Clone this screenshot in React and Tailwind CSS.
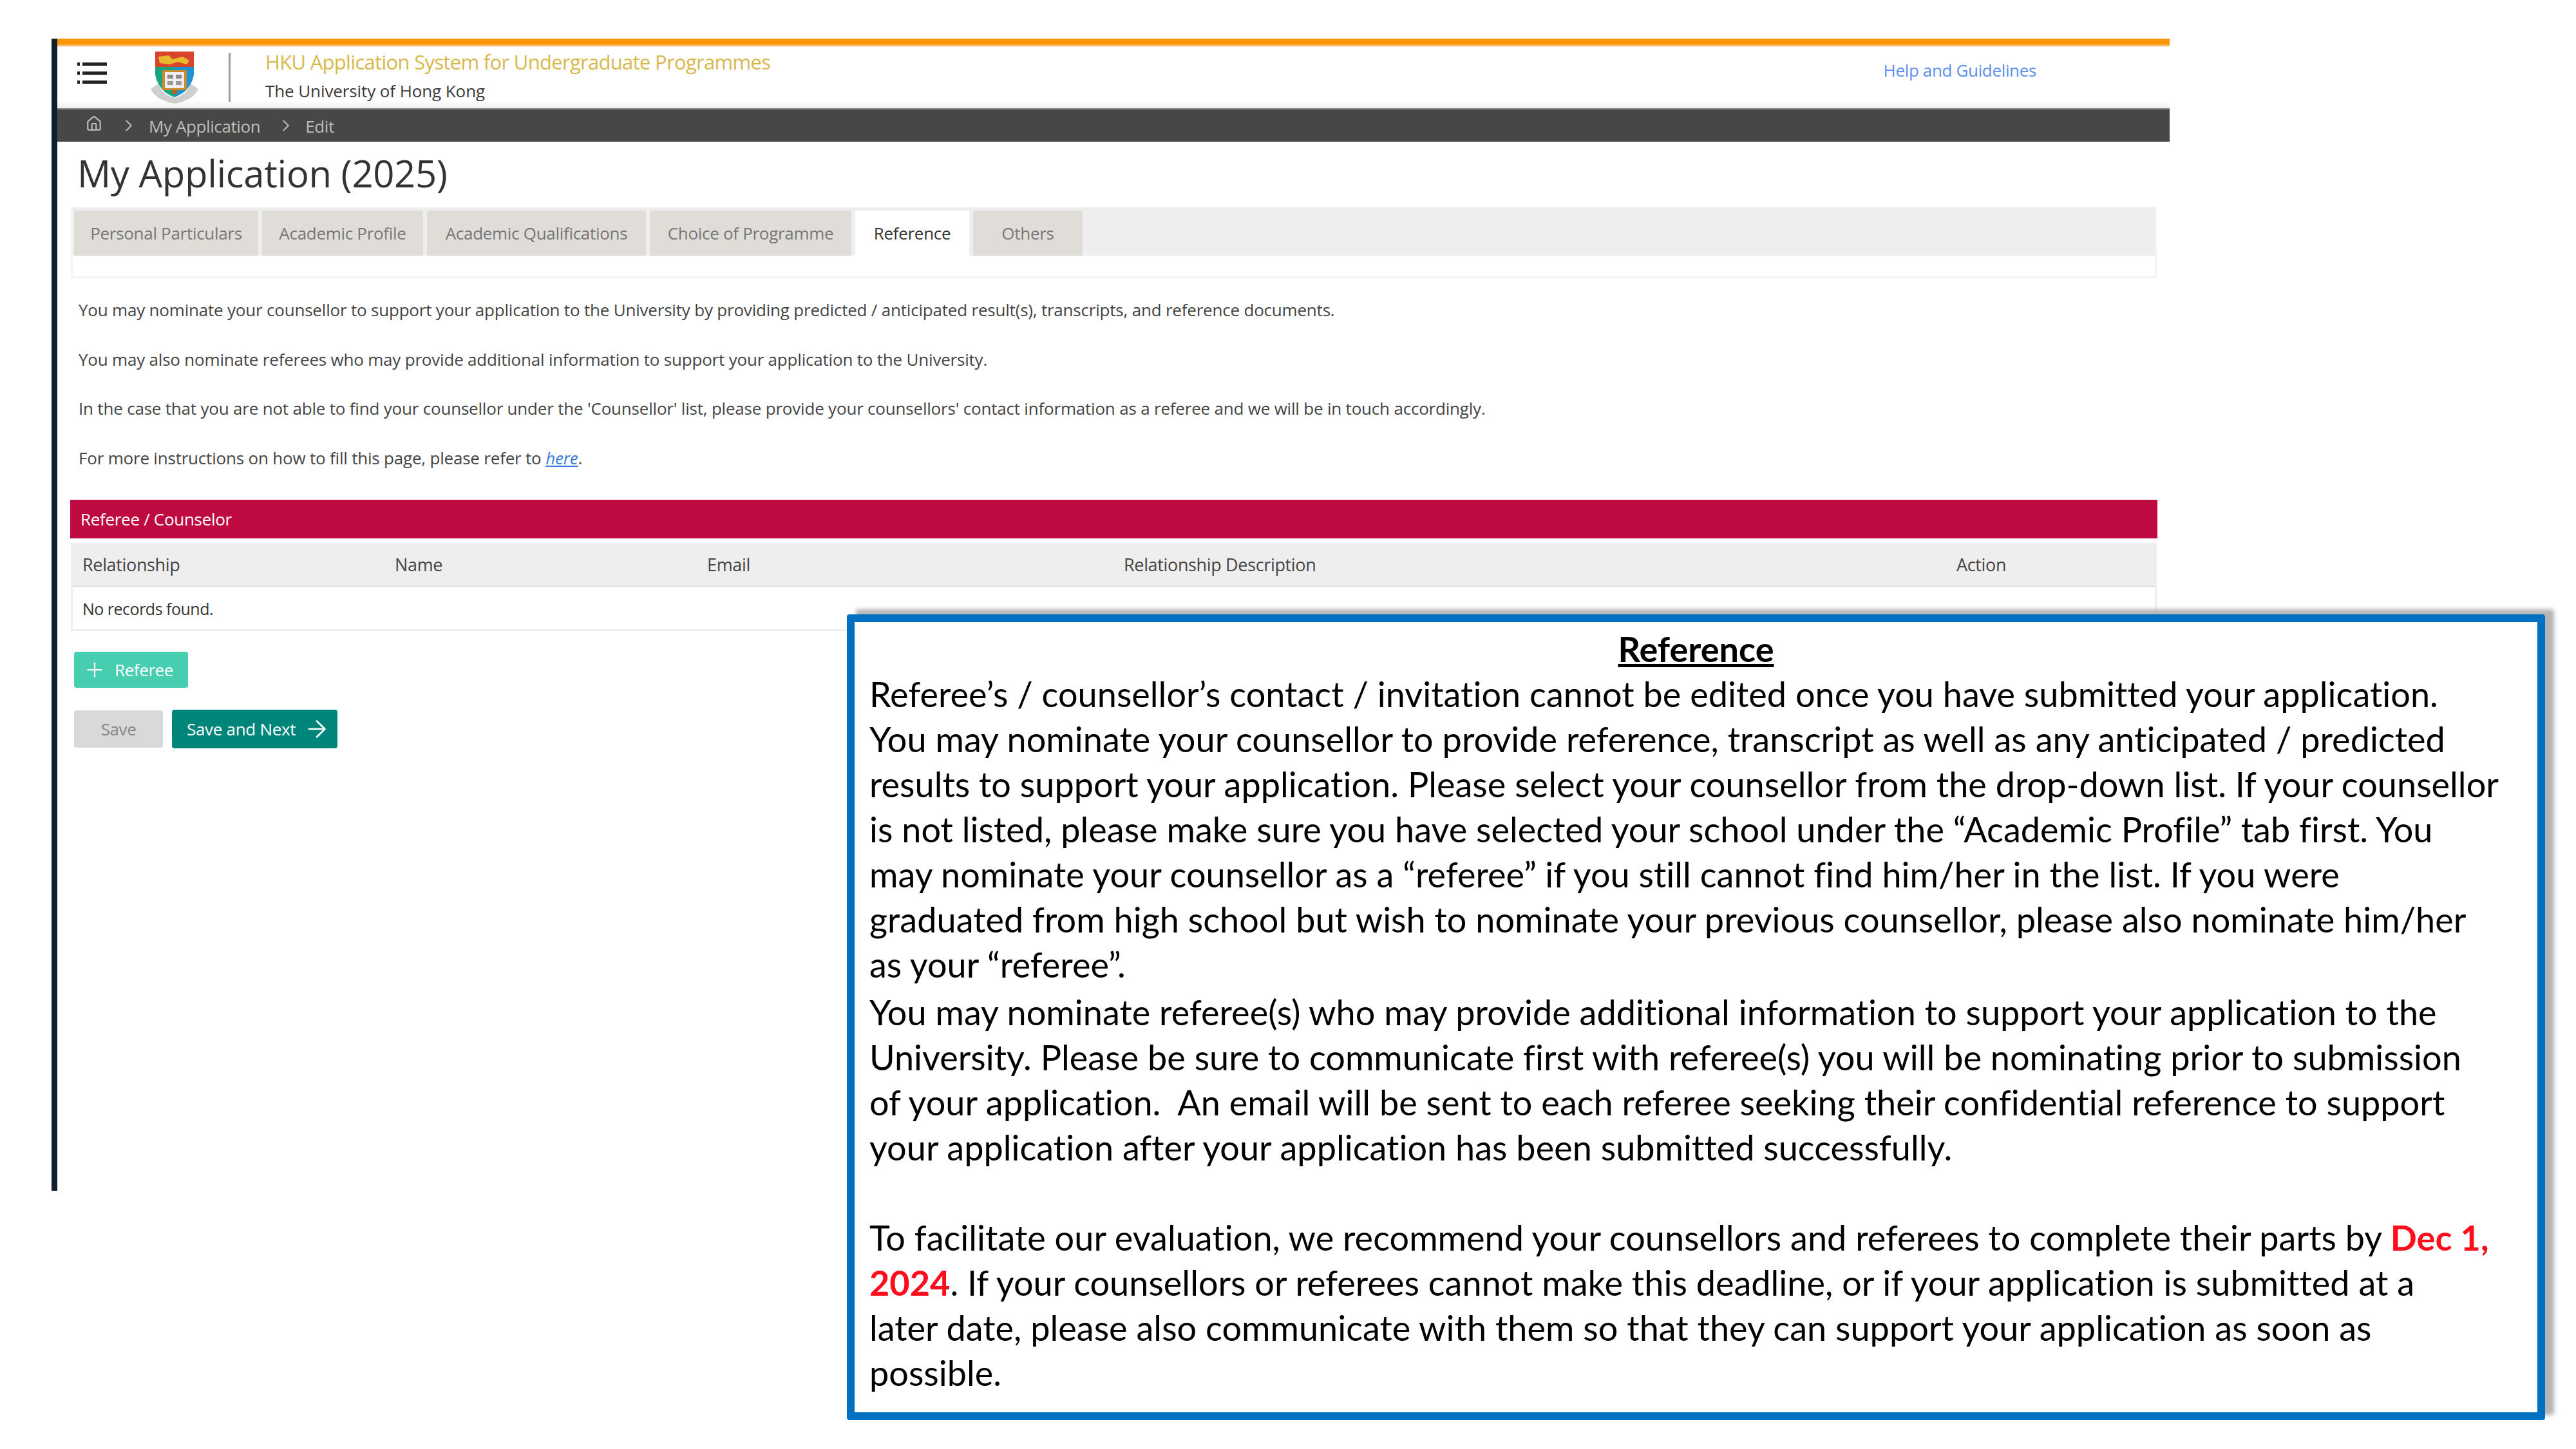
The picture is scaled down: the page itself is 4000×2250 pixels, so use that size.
import { Plus, ArrowRight, ChevronRight, Home } from "lucide-react";

const TABS = [
  { label: "Personal Particulars", w: "w-[286px]" },
  { label: "Academic Profile", w: "w-[250px]" },
  { label: "Academic Qualifications", w: "w-[340px]" },
  { label: "Choice of Programme", w: "w-[313px]" },
  { label: "Reference", w: "w-[177px]", active: true },
  { label: "Others", w: "w-[170px]" },
];

const INTRO = [
  "You may nominate your counsellor to support your application to the University by providing predicted / anticipated result(s), transcripts, and reference documents.",
  "You may also nominate referees who may provide additional information to support your application to the University.",
  "In the case that you are not able to find your counsellor under the 'Counsellor' list, please provide your counsellors' contact information as a referee and we will be in touch accordingly.",
];

const NOTE_A = [
  "Referee’s / counsellor’s contact / invitation cannot be edited once you have submitted your application.",
  "You may nominate your counsellor to provide reference, transcript as well as any anticipated / predicted",
  "results to support your application. Please select your counsellor from the drop-down list. If your counsellor",
  "is not listed, please make sure you have selected your school under the “Academic Profile” tab first. You",
  "may nominate your counsellor as a “referee” if you still cannot find him/her in the list. If you were",
  "graduated from high school but wish to nominate your previous counsellor, please also nominate him/her",
  "as your “referee”.",
];

const NOTE_B = [
  "You may nominate referee(s) who may provide additional information to support your application to the",
  "University. Please be sure to communicate first with referee(s) you will be nominating prior to submission",
  "of your application.  An email will be sent to each referee seeking their confidential reference to support",
  "your application after your application has been submitted successfully.",
];

// HKU crest, simplified
function Crest() {
  return (
    <svg width="74" height="82" viewBox="0 0 74 82" className="shrink-0">
      <path d="M0 58 Q8 76 37 81 Q66 76 74 58 L62 50 Q56 68 37 72 Q18 68 12 50 Z" fill="#cfcfcf" />
      <rect x="7" y="0" width="60" height="24" fill="#d9452b" />
      <path d="M12 8 L28 6 L34 12 L50 8 L60 14 L56 20 L42 16 L30 20 L14 18 Z" fill="#e8b92c" />
      <path d="M7 24 H37 V71 Q12 62 7 36 Z" fill="#17a584" />
      <path d="M67 24 H37 V71 Q62 62 67 36 Z" fill="#1b93d6" />
      <rect x="18" y="29" width="38" height="31" fill="#c98a2e" />
      <rect x="22" y="32" width="30" height="25" fill="#eeeeee" />
      <rect x="26" y="36" width="9" height="6" fill="#8a8a8a" />
      <rect x="39" y="36" width="9" height="6" fill="#8a8a8a" />
      <rect x="26" y="46" width="9" height="6" fill="#9a9a9a" />
      <rect x="39" y="46" width="9" height="6" fill="#9a9a9a" />
      <rect x="33" y="60" width="8" height="6" fill="#b5651d" />
    </svg>
  );
}

function MenuIcon() {
  return (
    <svg width="46" height="34" viewBox="0 0 46 34" className="shrink-0">
      <rect x="8" y="0" width="38" height="5" fill="#222" />
      <rect x="8" y="14" width="38" height="5" fill="#222" />
      <rect x="8" y="28" width="38" height="5" fill="#222" />
      <rect x="0" y="0" width="4" height="5" fill="#222" />
      <rect x="0" y="14" width="4" height="5" fill="#222" />
      <rect x="0" y="28" width="4" height="5" fill="#222" />
    </svg>
  );
}

function Header() {
  return (
    <div className="h-[96px] flex items-center bg-gradient-to-b from-white from-[88%] to-[#eeeeee]">
      <div className="ml-[31px] -mt-[12px]"><MenuIcon /></div>
      <div className="ml-[68px] mt-[2px]"><Crest /></div>
      <div className="ml-[47px] w-[3px] h-[76px] bg-[#9a9a9a]" />
      <div className="ml-[54px] flex flex-col gap-[12px] -mt-[6px]">
        <span className="text-[31px] leading-[36px] text-[#d8b84c] tracking-[-0.7px]">HKU Application System for Undergraduate Programmes</span>
        <span className="text-[26px] leading-[30px] text-[#3a3a3a] tracking-[-0.1px]">The University of Hong Kong</span>
      </div>
      <a className="ml-auto mr-[207px] -mt-[22px] text-[26px] text-[#5b8ff0] tracking-[-0.35px]">Help and Guidelines</a>
    </div>
  );
}

function Breadcrumb() {
  return (
    <div className="h-[52px] border-t-2 border-[#8a8a8a] bg-[#474747] flex items-center pl-[44px] text-[26px] text-[#bdbdbd] tracking-[-0.4px]">
      <Home size={26} strokeWidth={2} className="-mt-[6px] shrink-0" />
      <ChevronRight size={30} strokeWidth={1.5} className="ml-[26px] shrink-0" />
      <span className="ml-[16px] mt-[2px]">My Application</span>
      <ChevronRight size={30} strokeWidth={1.5} className="ml-[25px] shrink-0" />
      <span className="ml-[15px] mt-[2px]">Edit</span>
    </div>
  );
}

function Tabs() {
  return (
    <div className="mt-[13px] ml-[21px] w-[3239px] h-[110px] border-[3px] border-t-0 border-[#f3f3f3]">
      <div className="h-[75px] bg-[#eeeeee] flex pt-[5px] pl-[2px] gap-[6px]">
        {TABS.map((t) => (
          <div
            key={t.label}
            className={
              t.active
                ? t.w + " flex items-center justify-center bg-white text-[26px] text-[#333] tracking-[-0.3px]"
                : t.w + " flex items-center justify-center bg-[#e0ddd8] text-[26px] text-[#777] tracking-[-0.3px]"
            }
          >
            {t.label}
          </div>
        ))}
      </div>
    </div>
  );
}

function Table() {
  return (
    <div className="mt-[7px] ml-[21px] w-[3239px] border-[3px] border-[#eeeeee]">
      <div className="h-[66px] bg-[#eeeeee] border-b-[3px] border-[#e4e4e4] grid grid-cols-[485px_485px_647px_1293px_1fr] items-center pl-[15px] text-[27px] text-[#444] tracking-[-0.35px] font-medium">
        <span>Relationship</span>
        <span>Name</span>
        <span>Email</span>
        <span>Relationship Description</span>
        <span>Action</span>
      </div>
      <div className="h-[65px] flex items-center pl-[15px] pt-[3px] text-[25px] text-[#333] tracking-[-0.5px]">No records found.</div>
    </div>
  );
}

function Note() {
  return (
    <div className="absolute left-[1315px] top-[954px] w-[2637px] h-[1251px] border-[12px] border-[#0070c0] rounded-[4px] bg-white pl-[23px] pt-[7px] shadow-[14px_-8px_6px_#b5b5b5] font-['Lato',sans-serif] text-[54px] leading-[70px] text-black whitespace-pre tracking-[0.03px] [font-variant-ligatures:none]">
      <div className="text-center font-bold underline pr-[23px]">Reference</div>
      {NOTE_A.map((l) => <div key={l}>{l}</div>)}
      <div className="mt-[4px]">
        {NOTE_B.map((l) => <div key={l}>{l}</div>)}
      </div>
      <div className="mt-[70px]">
        <div>To facilitate our evaluation, we recommend your counsellors and referees to complete their parts by <b className="text-[#ff0d1d]">Dec 1,</b></div>
        <div><b className="text-[#ff0d1d]">2024</b>. If your counsellors or referees cannot make this deadline, or if your application is submitted at a</div>
        <div>later date, please also communicate with them so that they can support your application as soon as</div>
        <div>possible.</div>
      </div>
    </div>
  );
}

export default function App() {
  return (
    <div className="relative w-[4000px] h-[2250px] bg-white overflow-hidden font-['Open_Sans',sans-serif]">
      <div className="pt-[60px] pl-[80px]">
        <div className="w-[3289px] h-[1789px] border-l-[9px] border-[#10202c]">
          <div className="h-[12px] bg-[#f89406] border-b-[3px] border-[#fbb860]" />
          <Header />
          <Breadcrumb />
          <h1 className="mt-[9px] ml-[31px] text-[58px] leading-[80px] text-[#333] tracking-[-0.3px] font-medium">My Application (2025)</h1>
          <Tabs />
          <div className="mt-[35px] ml-[33px] flex flex-col gap-[48.5px] text-[26px] leading-[28px] text-[#444] tracking-[-0.2px]">
            {INTRO.map((p) => <p key={p}>{p}</p>)}
            <p>For more instructions on how to fill this page, please refer to <a className="italic underline text-[#3b7be0]">here</a>.</p>
          </div>
          <div className="mt-[51.5px] ml-[20px] w-[3241px] h-[60px] bg-[#be0a40] flex items-center pl-[16px] text-[26px] text-white tracking-[-0.3px]">Referee / Counselor</div>
          <Table />
          <div className="mt-[32px] ml-[26px]">
            <button className="w-[177px] h-[56px] rounded-[4px] bg-[#47cdb0] flex items-center pl-[14px] gap-[13px] text-[26px] text-white tracking-[-0.4px]">
              <Plus size={36} strokeWidth={1.5} />
              Referee
            </button>
            <div className="mt-[34px] flex items-center gap-[14px]">
              <button className="w-[138px] h-[58px] rounded-[4px] bg-[#d9d9d9] text-[26px] text-[#888] tracking-[-0.4px]">Save</button>
              <button className="w-[257px] h-[60px] rounded-[4px] bg-[#00857a] flex items-center pl-[23px] gap-[12px] text-[26px] text-white tracking-[-0.3px]">
                Save and Next
                <ArrowRight size={42} strokeWidth={1.5} />
              </button>
            </div>
          </div>
        </div>
      </div>
      <Note />
    </div>
  );
}
